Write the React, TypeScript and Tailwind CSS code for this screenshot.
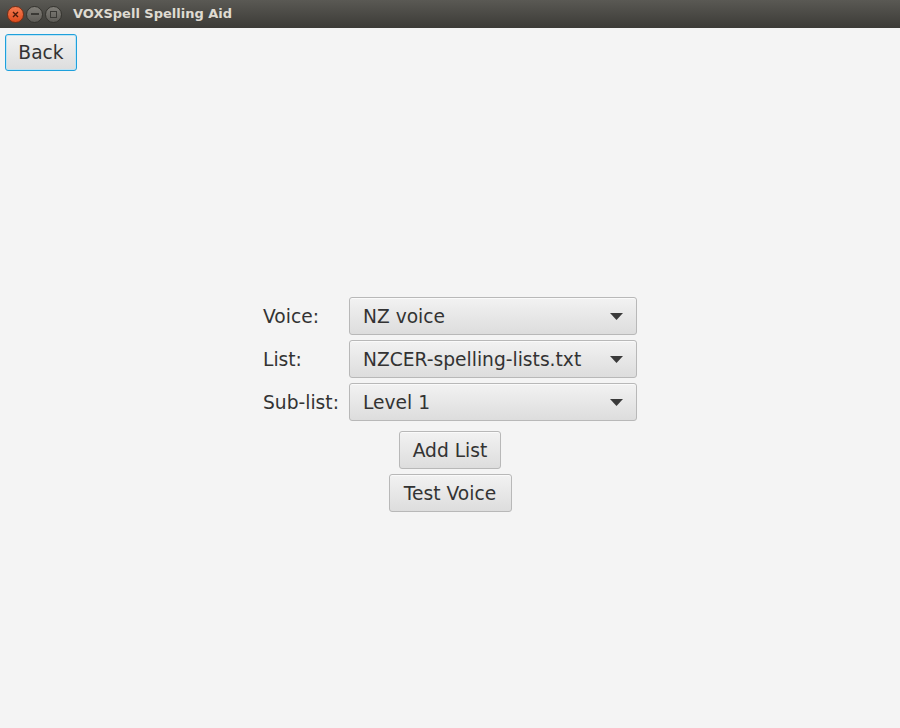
import React from "react";

const font = { fontFamily: '"DejaVu Sans", "Liberation Sans", sans-serif' };

function Arrow() {
  return (
    <svg width="13" height="7" viewBox="0 0 13 7" className="shrink-0">
      <polygon points="0,0 13,0 6.5,7" fill="#3a3a3a" />
    </svg>
  );
}

function Combo({ value }: { value: string }) {
  return (
    <div className="flex h-[38px] w-[288px] items-center justify-between rounded-[3px] border border-[#b8b8b8] bg-gradient-to-b from-[#f2f2f2] to-[#dddddd] pl-[13px] pr-[13px] text-[18.67px] text-[#333333] shadow-[inset_0_1px_0_#fafafa]">
      <span className="pt-[1px]">{value}</span>
      <Arrow />
    </div>
  );
}

function Btn({ label, w }: { label: string; w: string }) {
  return (
    <div
      className={`flex h-[38px] ${w} items-center justify-center rounded-[3px] border border-[#b8b8b8] bg-gradient-to-b from-[#f2f2f2] to-[#dddddd] pt-[1px] text-[18.67px] text-[#333333] shadow-[inset_0_1px_0_#fafafa]`}
    >
      {label}
    </div>
  );
}

export default function App() {
  return (
    <div className="flex h-[728px] w-[900px] flex-col bg-[#f4f4f4]" style={font}>
      <div className="flex h-[28px] items-center bg-gradient-to-b from-[#5a5954] to-[#3c3b37]">
        <div className="ml-[7px] flex items-center gap-[2px]">
          <div className="flex h-[17px] w-[17px] items-center justify-center rounded-full border border-[#7a2e14] bg-gradient-to-b from-[#f47a4f] to-[#de4a1a]">
            <svg width="7" height="7" viewBox="0 0 7 7">
              <path d="M1 1 L6 6 M6 1 L1 6" stroke="#4a1a0a" strokeWidth="1.4" />
            </svg>
          </div>
          <div className="flex h-[17px] w-[17px] items-center justify-center rounded-full border border-[#35342f] bg-gradient-to-b from-[#807e78] to-[#5e5c57]">
            <div className="h-[2px] w-[8px] bg-[#3a3935]" />
          </div>
          <div className="flex h-[17px] w-[17px] items-center justify-center rounded-full border border-[#35342f] bg-gradient-to-b from-[#807e78] to-[#5e5c57]">
            <div className="h-[7px] w-[7px] border-[1.5px] border-[#3a3935]" />
          </div>
        </div>
        <div className="ml-[11px] text-[13px] font-bold text-[#dfdbd2]">VOXSpell Spelling Aid</div>
      </div>
      <div className="pl-[5px] pt-[6px]">
        <div className="flex h-[37px] w-[72px] items-center justify-center rounded-[3px] border border-[#1ea0dc] bg-gradient-to-b from-[#f2f2f2] to-[#dddddd] pt-[1px] text-[18.67px] text-[#333333] shadow-[inset_0_0_0_1px_#bfe3f3]">
          Back
        </div>
      </div>
      <div className="flex flex-1 flex-col items-center pt-[226px]">
        <div className="flex w-[374px] flex-col">
          <div className="grid grid-cols-[86px_288px] gap-y-[5px]">
            <div className="flex items-center pt-[1px] text-[18.67px] text-[#333333]">Voice:</div>
            <Combo value="NZ voice" />
            <div className="flex items-center pt-[1px] text-[18.67px] text-[#333333]">List:</div>
            <Combo value="NZCER-spelling-lists.txt" />
            <div className="flex items-center pt-[1px] text-[18.67px] text-[#333333]">Sub-list:</div>
            <Combo value="Level 1" />
          </div>
          <div className="mt-[10px] flex flex-col items-center gap-[5px]">
            <Btn label="Add List" w="w-[102px]" />
            <Btn label="Test Voice" w="w-[123px]" />
          </div>
        </div>
      </div>
    </div>
  );
}
